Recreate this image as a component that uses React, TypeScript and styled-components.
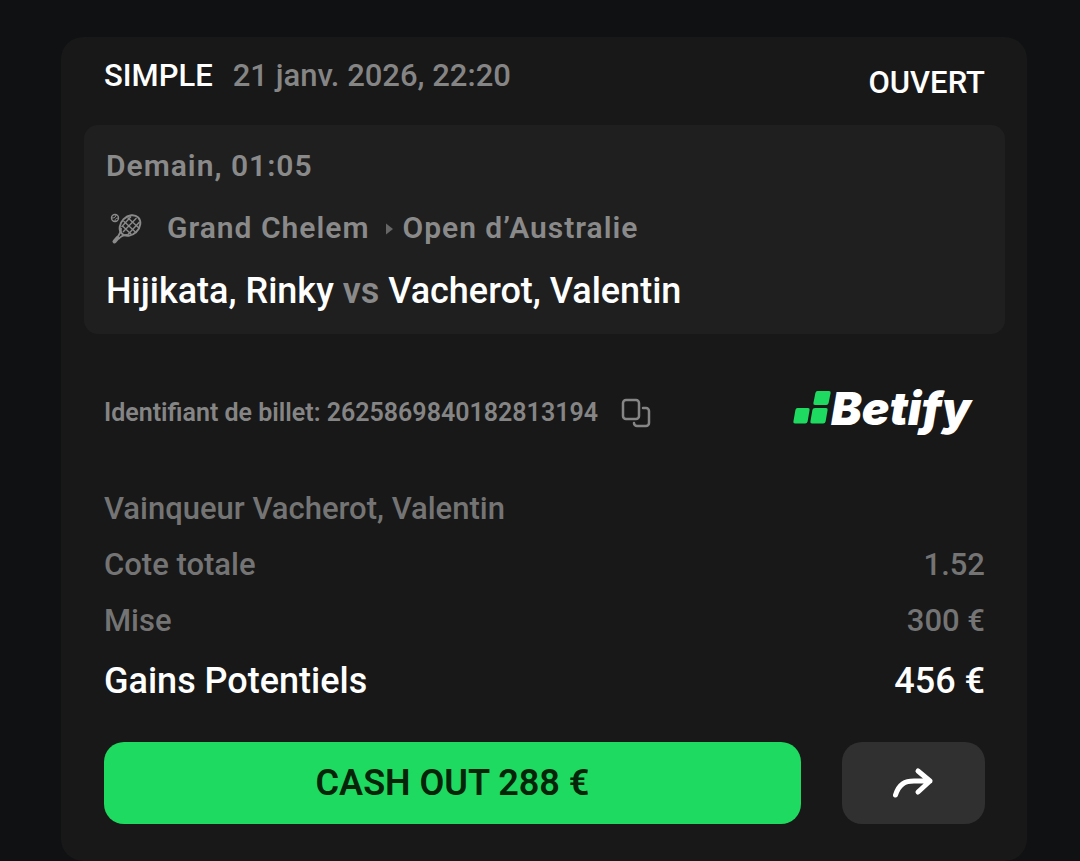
import React from "react";
import styled, { createGlobalStyle } from "styled-components";

const GlobalStyle = createGlobalStyle`
  * { box-sizing: border-box; }
  body {
    margin: 0;
    background: #0f1113;
    font-family: Roboto, "Liberation Sans", sans-serif;
    font-weight: 500;
    color: #ffffff;
  }
  button { font: inherit; border: 0; padding: 0; cursor: pointer; }
`;

const Page = styled.main`
  min-height: 100vh;
  padding: 37px 53px 0 61px;
`;

const Card = styled.article`
  padding: 0 22px 37px 23px;
  border-radius: 22px;
  background: #181818;
`;

const Header = styled.header`
  display: flex;
  justify-content: space-between;
  padding: 20px 20px;
  font-size: 31px;
`;

const Heading = styled.div`
  display: flex;
  gap: 20px;
  line-height: 38px;
`;

const BetType = styled.h1`
  margin: 0;
  font: inherit;
`;

const Placed = styled.time`
  color: #858585;
`;

const Status = styled.span`
  height: 48px;
  line-height: 52px;
`;

const EventBox = styled.section`
  padding: 10px 22px 11px;
  border-radius: 14px;
  background: #1f1f1f;
`;

const EventLine = styled.div`
  display: flex;
  align-items: center;
  color: #8a8a8a;
  font-size: 30px;
  font-weight: 600;
  line-height: 62px;
  letter-spacing: 1px;
`;

const SportIcon = styled.svg`
  width: 40px;
  height: 40px;
  margin-right: 21px;
`;

const Separator = styled.svg`
  width: 10px;
  height: 12px;
  margin: 2px 8px 0 15px;
`;

const Teams = styled.h2`
  margin: 0;
  font-size: 36px;
  font-weight: 500;
  line-height: 64px;
`;

const Versus = styled.span`
  color: #8a8a8a;
  font-weight: 600;
`;

const TicketRow = styled.div`
  display: flex;
  align-items: center;
  justify-content: space-between;
  height: 48px;
  margin: 54px 20px 45px;
`;

const Ticket = styled.div`
  display: flex;
  align-items: center;
  gap: 20px;
  color: #858585;
  font-size: 25px;
  font-weight: 600;
`;

const CopyButton = styled.button`
  display: flex;
  background: none;
  color: inherit;
`;

const Logo = styled.div`
  display: flex;
  align-items: center;
  margin: 0 14px 8px 0;
`;

const LogoText = styled.span`
  font-family: Inter, sans-serif;
  font-size: 46px;
  font-style: italic;
  font-weight: 900;
  line-height: 48px;
`;

const Details = styled.dl`
  margin: 0 20px;
`;

const Detail = styled.div<{ $strong?: boolean }>`
  display: flex;
  justify-content: space-between;
  color: ${(p) => (p.$strong ? "#ffffff" : "#747474")};
  font-size: ${(p) => (p.$strong ? 36 : 31)}px;
  line-height: ${(p) => (p.$strong ? 64 : 56)}px;
  dd { margin: 0; }
`;

const Actions = styled.div`
  display: flex;
  gap: 41px;
  margin: 29px 20px 0;
`;

const CashOut = styled.button`
  flex: 1;
  height: 82px;
  border-radius: 20px;
  background: #1fda60;
  color: #062409;
  font-size: 36px;
  font-weight: 600;
`;

const Share = styled.button`
  display: flex;
  align-items: center;
  justify-content: center;
  width: 143px;
  border-radius: 20px;
  background: #303030;
  color: #ffffff;
`;

export default function App() {
  return (
    <>
      <GlobalStyle />
      <Page>
        <Card>
          <Header>
            <Heading>
              <BetType>SIMPLE</BetType>
              <Placed dateTime="2026-01-21T22:20">21 janv. 2026, 22:20</Placed>
            </Heading>
            <Status>OUVERT</Status>
          </Header>

          <EventBox>
            <EventLine>Demain, 01:05</EventLine>
            <EventLine>
              <SportIcon viewBox="0 0 40 40" fill="none" stroke="currentColor" aria-hidden="true">
                <circle cx="9" cy="10" r="3.500" strokeWidth="1.400" />
                <path d="M6 10c3 0 4-1.500 4-3.500M9 13c0-2 1-3 3.500-3" strokeWidth="1" />
                <ellipse cx="24" cy="17.500" rx="11.500" ry="9" transform="rotate(-45 24 17.500)" strokeWidth="2" />
                <path d="M17.500 13l13 12M21.500 9.500l12 11M16.500 18l9 8.500M30.500 10L17 24M25 8.500L15.500 19M33.500 14L21.500 27" strokeWidth="1.400" />
                <path d="M15 20c.3 4-1 6-4 9.500M21.500 27c-4-.3-6 .8-9 4" strokeWidth="1.800" />
                <path d="M11.500 30L8.500 33.500" strokeWidth="4" strokeLinecap="round" />
              </SportIcon>
              Grand Chelem
              <Separator viewBox="0 0 10 12" fill="#666666" aria-hidden="true">
                <path d="M2 0.500L9 6L2 11.500Z" />
              </Separator>
              Open d’Australie
            </EventLine>
            <Teams>
              Hijikata, Rinky <Versus>vs</Versus> Vacherot, Valentin
            </Teams>
          </EventBox>

          <TicketRow>
            <Ticket>
              Identifiant de billet: 2625869840182813194
              <CopyButton aria-label="Copier">
                <svg width="34" height="32" viewBox="0 0 34 32" fill="none" stroke="currentColor" strokeWidth="2.500" strokeLinecap="round" strokeLinejoin="round">
                  <rect x="5" y="4" width="16" height="19" rx="3" />
                  <path d="M25 12h3a3 3 0 0 1 3 3v12a3 3 0 0 1-3 3H19a3 3 0 0 1-3-3" />
                </svg>
              </CopyButton>
            </Ticket>
            <Logo>
              <svg width="38" height="36" viewBox="0 0 38 36" fill="#1fda60" aria-hidden="true">
                <path d="M24.500 1H36q2 0 1.600 2l-2 10q-.4 2-2.400 2H22q-2 0-1.600-2l2-10q.4-2 2.100-2Z" />
                <path d="M4.500 18H15q2 0 1.600 2l-2 11.500q-.4 2-2.400 2H2q-2 0-1.600-2l2-11.500q.4-2 2.100-2Z" />
                <path d="M22 18H33q2 0 1.600 2l-2 11.500q-.4 2-2.400 2H19q-2 0-1.600-2l2-11.500q.4-2 2.600-2Z" />
              </svg>
              <LogoText>Betify</LogoText>
            </Logo>
          </TicketRow>

          <Details>
            <Detail><dt>Vainqueur Vacherot, Valentin</dt></Detail>
            <Detail><dt>Cote totale</dt><dd>1.52</dd></Detail>
            <Detail><dt>Mise</dt><dd>300 €</dd></Detail>
            <Detail $strong><dt>Gains Potentiels</dt><dd>456 €</dd></Detail>
          </Details>

          <Actions>
            <CashOut>CASH OUT 288 €</CashOut>
            <Share aria-label="Partager">
              <svg width="44" height="32" viewBox="0 0 44 32" fill="none" stroke="currentColor" strokeWidth="5" strokeLinecap="round" strokeLinejoin="round">
                <path d="M3.500 28C7 17 13 14 22 14H38M26 4L38 14L26 25" />
              </svg>
            </Share>
          </Actions>
        </Card>
      </Page>
    </>
  );
}
